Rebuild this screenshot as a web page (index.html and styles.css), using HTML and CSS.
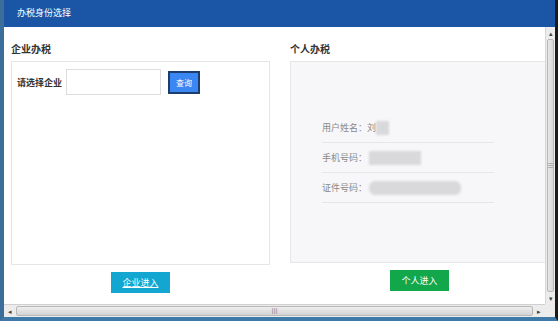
FILE: index.html
```html
<!DOCTYPE html>
<html>
<head>
    <title>办税身份选择</title>
    <link rel="stylesheet" href="styles.css">
</head>
<body>
    <div class="window">
        <div class="titlebar">办税身份选择</div>
        <div class="frame">
            <div class="content">
                <!-- 企业办税 -->
                <div class="panel">
                    <h2>企业办税</h2>
                    <div class="box">
                        <div class="search-row">
                            <label>请选择企业</label>
                            <input type="text" class="search-input">
                            <button class="btn-query">查询</button>
                        </div>
                    </div>
                    <div class="actions">
                        <button class="btn-enter btn-company">企业进入</button>
                    </div>
                </div>
                <!-- 个人办税 -->
                <div class="panel">
                    <h2>个人办税</h2>
                    <div class="box box-grey">
                        <div class="info-list">
                            <div class="info-row">用户姓名：刘<span class="mask mask-name"></span></div>
                            <div class="info-row">手机号码：<span class="mask mask-phone"></span></div>
                            <div class="info-row">证件号码：<span class="mask mask-id"></span></div>
                        </div>
                    </div>
                    <div class="actions">
                        <button class="btn-enter btn-person">个人进入</button>
                    </div>
                </div>
            </div>
            <div class="vscroll">
                <div class="arrow">&#9652;</div>
                <div class="vthumb"><span class="grip">&#8801;</span></div>
                <div class="arrow">&#9662;</div>
            </div>
            <div class="hscroll">
                <div class="arrow">&#9666;</div>
                <div class="hthumb"><span class="grip">III</span></div>
                <div class="arrow">&#9656;</div>
            </div>
            <div class="corner"></div>
        </div>
    </div>
</body>
</html>
```

FILE: styles.css
```css
body {
    margin: 0;
    font-family: "Noto Sans CJK SC", "Noto Sans", sans-serif;
    font-size: 9px;
    color: #333;
}
.window {
    width: 558px;
    height: 321px;
    display: flex;
    flex-direction: column;
    box-sizing: border-box;
    border-left: 4px solid #3c6e9c;
    border-right: 3px solid #1a1a1a;
    border-bottom: 4px solid #3f79a8;
    background: white;
    overflow: hidden;
}
.titlebar {
    height: 27px;
    line-height: 26px;
    margin-left: -4px;
    padding-left: 17px;
    background: #1b56a6;
    color: white;
    font-size: 9px;
}
.frame {
    flex: 1;
    display: grid;
    grid-template-columns: 1fr 10px;
    grid-template-rows: 1fr 13px;
    min-height: 0;
}
.content {
    display: flex;
    gap: 20px;
    padding: 12px 0 0 7px;
    overflow: hidden;
}
.panel {
    width: 259px;
    flex-shrink: 0;
}
h2 {
    margin: 0 0 2px;
    font-size: 10px;
    line-height: 20px;
    font-weight: bold;
    color: #333;
}
.box {
    border: 1px solid #e6e6e6;
    box-sizing: border-box;
    height: 204px;
}
.box-grey {
    background: #f7f7f9;
    height: 202px;
}
.search-row {
    display: flex;
    align-items: center;
    padding: 7px 0 0 5px;
}
.search-row label {
    font-weight: bold;
    font-size: 9px;
    width: 49px;
    white-space: nowrap;
}
.search-input {
    width: 95px;
    height: 26px;
    box-sizing: border-box;
    border: 1px solid #ddd;
    margin: 0;
}
.btn-query {
    margin-left: 7px;
    width: 32px;
    height: 23px;
    padding: 0;
    background: #3a86f2;
    color: white;
    border: 2px solid #1d3d6a;
    font-family: inherit;
    font-size: 8px;
}
.info-list {
    margin: 51px 0 0 31px;
    width: 172px;
}
.info-row {
    height: 29px;
    border-bottom: 1px solid #e6e6e6;
    color: #888;
    font-size: 9px;
    display: flex;
    align-items: center;
}
.mask {
    display: inline-block;
    height: 14px;
    background: #d9d9dc;
    filter: blur(1px);
}
.mask-name {
    width: 13px;
}
.mask-phone {
    margin-left: 2px;
    width: 52px;
}
.mask-id {
    margin-left: 2px;
    width: 92px;
    border-radius: 6px;
}
.actions {
    display: flex;
    justify-content: center;
    padding-top: 7px;
}
.btn-enter {
    width: 59px;
    height: 21px;
    padding: 0;
    border: none;
    color: white;
    font-family: inherit;
    font-size: 9px;
}
.btn-company {
    background: #13a6d0;
    text-decoration: underline;
}
.btn-person {
    background: #12a74a;
}
.vscroll {
    display: flex;
    flex-direction: column;
    background: #ececec;
    border-left: 1px solid #d8d8d8;
}
.hscroll {
    display: flex;
    background: #ececec;
    border-top: 1px solid #d0d0d0;
}
.arrow {
    flex: 0 0 12px;
    font-size: 7px;
    color: #444;
    display: flex;
    align-items: center;
    justify-content: center;
}
.vthumb {
    flex: 1;
    margin: 0 1px;
    background: linear-gradient(to right, #e8e8e8, #d6d6d6);
    border: 1px solid #b8b8b8;
    border-radius: 2px;
    display: flex;
    align-items: center;
    justify-content: center;
}
.hthumb {
    flex: 1;
    margin: 1px 0;
    background: linear-gradient(to bottom, #eeeeee, #d3d3d3);
    border: 1px solid #b8b8b8;
    border-radius: 2px;
    display: flex;
    align-items: center;
    justify-content: center;
}
.grip {
    font-size: 7px;
    color: #888;
    line-height: 1;
}
.corner {
    background: #ececec;
}
```
